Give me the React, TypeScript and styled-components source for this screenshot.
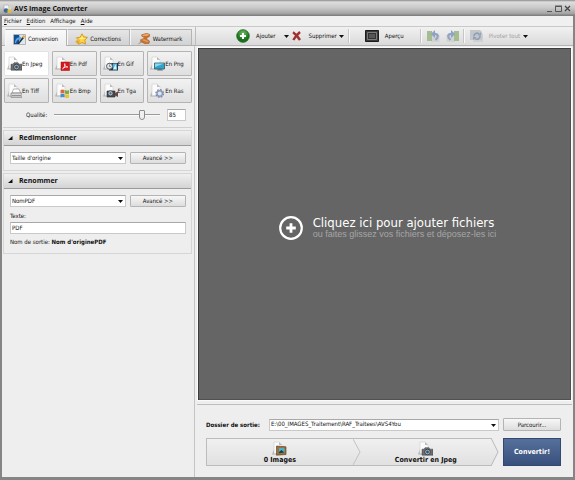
import React, { useState } from "react";
import styled, { createGlobalStyle, css } from "styled-components";

const GlobalStyle = createGlobalStyle`
  *, *::before, *::after { box-sizing: border-box; }
  html, body, #root { margin: 0; height: 100%; }
  body, button, input, select {
    font-family: "DejaVu Sans Condensed", "DejaVu Sans", "Noto Sans", sans-serif;
    font-size: 6px;
    color: #111;
  }
  body { line-height: 8px; overflow: hidden; }
  button, input, select { margin: 0; padding: 0; line-height: 8px; }
  svg { display: block; flex: none; }
`;

const Window = styled.div`
  display: flex;
  flex-direction: column;
  height: 100vh;
  background: #eeeeee;
  border: solid #858585;
  border-width: 0 2px 3px;
`;

const TitleBar = styled.header`
  display: flex;
  align-items: center;
  gap: 2px;
  flex: none;
  height: 16px;
  margin: 0 -2px;
  padding: 1px 4px 0 3px;
  background: linear-gradient(#8c8c8c 0, #dedede 2px, #c8c8c8 8px, #a0a0a0 14px, #808080 15px);
`;

const Title = styled.h1`
  flex: 1;
  margin: 0;
  font-family: "Open Sans", "Noto Sans", sans-serif;
  font-size: 7px;
  font-weight: bold;
`;

const WindowButton = styled.button`
  width: 7px;
  height: 10px;
  border: 0;
  background: none;
`;

const MenuBar = styled.nav`
  display: flex;
  align-items: center;
  gap: 5px;
  flex: none;
  height: 10px;
  padding-left: 2px;
  background: #f0f0f0;
`;

const MenuItem = styled.button`
  border: 0;
  background: none;
`;

const Strip = styled.div`
  display: flex;
  flex: none;
  height: 20px;
  border-top: 1px solid #c9c9c9;
  background: linear-gradient(#f1f1f1, #d9d9d9);
`;

const Tabs = styled.div`
  display: flex;
  flex: none;
  align-items: stretch;
  width: 194px;
  padding: 2px 3px 0 3px;
  border-right: 1px solid #bdbdbd;
  border-bottom: 1px solid #b0b0b0;
`;

const Tab = styled.button<{ $active?: boolean }>`
  display: flex;
  flex: 1;
  align-items: center;
  gap: 2px;
  height: 16px;
  padding: 2px 0 0 7px;
  border: 1px solid #b4b4b4;
  border-left-color: #f7f7f7;
  border-bottom: 0;
  background: linear-gradient(#e6e6e6, #d2d2d2);
  ${(p) =>
    p.$active &&
    css`
      height: 17px;
      background: linear-gradient(#fafafa, #eeeeee);
    `}
`;

const Toolbar = styled.div`
  display: flex;
  align-items: center;
  flex: 1;
  min-width: 0;
  padding-left: 40px;
  border-bottom: 1px solid #b5b5b5;
`;

const Tool = styled.button<{ $gap?: number; $after?: number }>`
  display: flex;
  align-items: center;
  gap: ${(p) => p.$gap ?? 6}px;
  margin-right: ${(p) => p.$after ?? 0}px;
  border: 0;
  background: none;
  white-space: nowrap;
  &:disabled { color: #a2a2a2; }
`;

const Divider = styled.span<{ $after?: number }>`
  flex: none;
  width: 2px;
  height: 14px;
  margin-right: ${(p) => p.$after ?? 5}px;
  border-left: 1px solid #c6c6c6;
  border-right: 1px solid #f8f8f8;
`;

const Body = styled.div`
  display: flex;
  flex: 1;
  min-height: 0;
`;

const Side = styled.aside`
  display: flex;
  flex-direction: column;
  flex: none;
  gap: 2px;
  width: 193px;
  padding: 5px 2px 0 1px;
  border-right: 1px solid #c4c4c4;
`;

const FormatPanel = styled.div`
  display: flex;
  flex-direction: column;
  height: 77px;
  border-bottom: 1px solid #cfcfcf;
`;

const FormatGrid = styled.div`
  display: grid;
  grid-template-columns: repeat(4, 1fr);
  gap: 2px 3px;
  padding-left: 1px;
`;

const FormatButton = styled.button<{ $active?: boolean }>`
  display: flex;
  align-items: center;
  height: 25px;
  padding-left: 2px;
  border: 1px solid #b4b4b4;
  border-radius: 1px;
  background: linear-gradient(#f2f2f2, #dfdfdf);
  white-space: nowrap;
  ${(p) =>
    p.$active &&
    css`
      border-color: #e2e2e2;
      background: #ffffff;
    `}
`;

const QualityRow = styled.div`
  display: flex;
  align-items: center;
  gap: 7px;
  padding: 6px 6px 0 23px;
`;

const Slider = styled.input`
  appearance: none;
  flex: 1;
  min-width: 0;
  height: 12px;
  background: none;
  &::-webkit-slider-runnable-track {
    height: 2px;
    border-top: 1px solid #9a9a9a;
    border-bottom: 1px solid #fbfbfb;
  }
  &::-webkit-slider-thumb {
    appearance: none;
    width: 6px;
    height: 10px;
    margin-top: -5px;
    border: 1px solid #8c8c8c;
    border-radius: 1px 1px 3px 3px;
    background: #f0f0f0;
  }
`;

const TextBox = styled.input`
  display: block;
  width: 100%;
  height: 12px;
  padding: 0 1px 2px;
  border: 1px solid #c9c9c9;
  border-top-color: #a8a8a8;
  background: #ffffff;
`;

const QualityBox = styled(TextBox)`
  flex: none;
  width: 19px;
`;

const Section = styled.section`
  border: 1px solid #d6d6d6;
`;

const SectionHead = styled.h2`
  margin: 0;
  font-size: 7px;
`;

const SectionToggle = styled.button`
  display: flex;
  align-items: center;
  gap: 6px;
  width: 100%;
  height: 15px;
  padding-left: 4px;
  border: 0;
  border-bottom: 1px solid #9b9b9b;
  background: linear-gradient(#f0f0f0, #d4d4d4);
  font-family: "Open Sans", "Noto Sans", sans-serif;
  font-size: 7px;
  font-weight: bold;
`;

const SectionBody = styled.div`
  padding: 6px 5px 6px 6px;
`;

const Row = styled.div`
  display: flex;
  gap: 4px;
`;

const SelectWrap = styled.span`
  position: relative;
  flex: 1;
  min-width: 0;
  & > svg {
    position: absolute;
    right: 3px;
    top: 5px;
    pointer-events: none;
  }
`;

const SelectBox = styled.select`
  appearance: none;
  display: block;
  width: 100%;
  height: 12px;
  padding: 0 10px 1px 1px;
  border: 1px solid #c9c9c9;
  border-top-color: #a8a8a8;
  border-radius: 0;
  background: #ffffff;
`;

const PushButton = styled.button`
  flex: none;
  width: 56px;
  height: 12px;
  border: 1px solid #b4b4b4;
  border-radius: 1px;
  background: linear-gradient(#f7f7f7, #dddddd);
`;

const FieldLabel = styled.label`
  display: block;
  padding: 5px 0 2px;
`;

const OutputName = styled.p`
  margin: 0;
  padding: 4px 0 1px;
`;

const Main = styled.main`
  display: flex;
  flex-direction: column;
  flex: 1;
  min-width: 0;
  padding: 1px 1px 0 2px;
`;

const DropArea = styled.button`
  display: flex;
  flex: 1;
  align-items: center;
  justify-content: center;
  gap: 10px;
  padding: 7px 0 0 6px;
  border: 1px solid #fafafa;
  background: #656565;
  box-shadow: inset 1px 1px 0 #3d3d3d, inset 0 0 0 1px #505050;
  text-align: left;
`;

const DropTitle = styled.span`
  display: block;
  font-size: 13px;
  line-height: 14px;
  color: #ffffff;
`;

const DropHint = styled.span`
  display: block;
  font-family: "Liberation Sans", Arial, sans-serif;
  font-size: 9px;
  line-height: 9px;
  color: #a6a6a6;
`;

const Output = styled.footer`
  display: grid;
  grid-template-columns: 1fr 58px;
  gap: 7px 4px;
  flex: none;
  margin-top: 3px;
  padding: 13px 11px 11px 9px;
  border-top: 1px solid #bdbdbd;
`;

const Destination = styled.div`
  display: flex;
  align-items: center;
  gap: 9px;
`;

const BoldLabel = styled.label`
  font-weight: bold;
  white-space: nowrap;
`;

const BrowseButton = styled(PushButton)`
  width: 100%;
  height: 13px;
`;

const Steps = styled.div`
  display: grid;
  grid-template-columns: 10fr 9fr;
  height: 28px;
  border: 1px solid #bcbcbc;
  border-right: 0;
  background: linear-gradient(#f0f0f0, #e1e1e1);
`;

const Step = styled.div`
  display: flex;
  align-items: stretch;
  justify-content: space-between;
`;

const StepText = styled.div`
  display: flex;
  flex: 1;
  flex-direction: column;
  align-items: center;
  padding-top: 2px;
  font-size: 7px;
  font-weight: bold;
`;

const ConvertButton = styled.button`
  height: 28px;
  border: 1px solid #33496f;
  background: linear-gradient(#56709c, #38507c);
  color: #ffffff;
  font-size: 7px;
  font-weight: bold;
`;

const Caret = () => (
  <svg width="5" height="3" viewBox="0 0 5 3"><path d="M0 0h5L2.5 3z" fill="#111" /></svg>
);

const AppIcon = () => (
  <svg width="9" height="10" viewBox="0 0 9 10">
    <path d="M1 1h4l1 2v5H1z" fill="#f4f4f4" stroke="#999" strokeWidth=".5" />
    <circle cx="3" cy="6.5" r="2.3" fill="#39699b" />
    <circle cx="6.3" cy="7" r="2" fill="#e7bd26" />
    <path d="M5 2l3 1v3L5 5z" fill="#d7d6c9" />
  </svg>
);

const ConversionIcon = () => (
  <svg width="13" height="11" viewBox="0 0 13 11">
    <path d="M.5.5h12v10H.5z" fill="#fff" stroke="#b5b5b5" />
    <path d="M1 1h5.5v9H1z" fill="#174d92" />
    <path d="M6.5 1H12v9H6.5z" fill="#dfe6ee" />
    <path d="M2 9c0-4 2-5.5 4-5.5V1.5l3 2.7-3 2.8V5.5C4.5 5.5 3.5 7 3 9z" fill="#5da7dc" />
    <path d="M4.5 10L9.5 3l1.500 1-5 6z" fill="#202d3c" />
    <path d="M9 3l1.500-2 1.800 1.200L11 4.200z" fill="#e6a930" />
  </svg>
);

const StarIcon = () => (
  <svg width="13" height="12" viewBox="0 0 13 12">
    <path d="M7 .8l1.600 3 3.900.5-2.700 2.800.7 4L7 9.500l-3.500 1.700.5-3.700L1.400 4.800l3.700-.5z" fill="#ffd43a" stroke="#ca8308" strokeWidth=".7" />
    <path d="M7 2.500l.8 2.300 2.700.4-4.500 1-2-.8 2-.5z" fill="#fff3a0" />
    <path d="M.3 8.300l2.200-1.300 1.300 1.600L2.500 11z" fill="#e8a51b" />
  </svg>
);

const StampIcon = () => (
  <svg width="13" height="12" viewBox="0 0 13 12">
    <path d="M3.500 1.800L8.800.3l3 1.200-.5 2.300-2.200.7-.3 1.700 2.700 1.800-.4 2.400-4.300.4-4.300-2.300.2-2 2.700-.8L6.200 4 4 3.500z" fill="#c8712e" stroke="#9a5828" strokeWidth=".5" />
    <path d="M4.300 1.900L9 .8l2.200.9-1.700 1.100-4.800.2z" fill="#f0aa6c" />
    <path d="M3 6.800l3.200-.6 4.300 2.100-1.200.9z" fill="#e79a58" />
    <path d="M.5 10.800l3.200-2" stroke="#8a7a6a" strokeWidth=".8" fill="none" />
  </svg>
);

const AddIcon = () => (
  <svg width="14" height="14" viewBox="0 0 14 14">
    <defs>
      <radialGradient id="green" cy=".3"><stop stopColor="#77be66" /><stop offset="1" stopColor="#16701b" /></radialGradient>
    </defs>
    <circle cx="7" cy="7" r="6.4" fill="url(#green)" stroke="#27672a" strokeWidth=".6" />
    <path d="M7 4v6M4 7h6" stroke="#fff" strokeWidth="2" />
  </svg>
);

const DeleteIcon = () => (
  <svg width="9" height="10" viewBox="0 0 9 10">
    <path d="M1 1.200Q4.500 3.500 8 9M8 1Q4 4.500 1.300 9" stroke="#a33030" strokeWidth="2.400" fill="none" />
  </svg>
);

const PreviewIcon = () => (
  <svg width="14" height="12" viewBox="0 0 14 12">
    <path d="M.5.5h13v11H.5z" fill="#3a3a3a" stroke="#1b1b1b" />
    <path d="M2.500 2.500h9v7h-9z" fill="#333" stroke="#8d8d8d" strokeWidth=".8" />
    <path d="M4 4h6v4H4z" fill="#555" />
  </svg>
);

const RotateIcon = ({ right = false }: { right?: boolean }) => (
  <svg width="13" height="12" viewBox="0 0 13 12">
    <g transform={right ? "matrix(-1 0 0 1 13 0)" : undefined}>
      <path d="M4 5h8.500v7H4z" fill="#d0d3d0" />
      <path d="M0 1h5v10H0z" fill="#a3bd90" />
      <path d="M7 3.800c4.500-.3 5 3.200 1.500 6.200" fill="none" stroke="#8fa3c4" strokeWidth="2.200" />
      <path d="M3.800 4L8 0v8z" fill="#8fa3c4" />
    </g>
  </svg>
);

const RotateAllIcon = () => (
  <svg width="13" height="12" viewBox="0 0 13 12">
    <path d="M3 2h8l2 2v8H3z" fill="#cfd1d3" />
    <path d="M0 0h10l2 2v8H0z" fill="#c3c7c9" />
    <path d="M4 6.500a3 3 0 0 1 5-2.500M10 6a3 3 0 0 1-5 2.500" fill="none" stroke="#8f9eb9" strokeWidth="1.600" />
    <path d="M7.500 5.400H11V2.200zM6.500 7H3v3z" fill="#8f9eb9" />
  </svg>
);

const glyphs: Record<string, React.ReactNode> = {
  Jpeg: (
    <g>
      <path d="M4 8.200h2l1-1.500h4l1 1.500h3v6H4z" fill="#6b6f73" stroke="#3a3a3a" strokeWidth=".5" />
      <circle cx="9.500" cy="11" r="2.800" fill="#aab7c1" stroke="#222" strokeWidth=".7" />
      <circle cx="9.500" cy="11" r="1.400" fill="#315475" />
    </g>
  ),
  Pdf: (
    <g>
      <path d="M6 6h8.500v8.500H6z" fill="#d5191f" stroke="#a20d13" strokeWidth=".5" />
      <path d="M7.500 12.800c2-1 2.800-4 2.300-5.200-1 .7 1 4 3 3.400-1-.7-4 .5-5.300 1.800z" fill="none" stroke="#fff" strokeWidth=".8" />
    </g>
  ),
  Gif: (
    <g>
      <path d="M6 7h9v7.500H6z" fill="#29363f" />
      <path d="M10 7.500h4v6.500h-4z" fill="#4db3e2" />
      <path d="M10.500 13l2-5 1 5z" fill="#e0f5ff" />
      <circle cx="6.500" cy="10.200" r="3" fill="#e0e2e2" stroke="#596168" />
      <path d="M6.500 8.500v2h1.500" fill="none" stroke="#555" strokeWidth=".6" />
    </g>
  ),
  Png: (
    <g>
      <path d="M4.500 7h10v6h-10z" fill="#2da3cf" stroke="#315869" strokeWidth=".8" />
      <path d="M5 7.400h9L5 11z" fill="#8cdaef" />
      <path d="M8 13h4l1 1.500H7z" fill="#6b7174" />
    </g>
  ),
  Tiff: (
    <g>
      <path d="M6.500 6H12l1.500 4H5z" fill="#fff" stroke="#888" strokeWidth=".6" />
      <path d="M4 10h11v4.300H4z" fill="#d6d8d9" stroke="#727577" strokeWidth=".7" />
      <path d="M5 12.600h9" stroke="#8a8a8a" />
    </g>
  ),
  Bmp: (
    <g>
      <path d="M5.500 7q2-1 4 0v3.400q-2-.9-4 0z" fill="#e3653b" />
      <path d="M10 7q2 1 4 0v3.400q-2 1-4 0z" fill="#75ae43" />
      <path d="M5.500 11q2-1 4 0v3.400q-2-.9-4 0z" fill="#468fce" />
      <path d="M10 11q2 1 4 0v3.400q-2 1-4 0z" fill="#efbf35" />
    </g>
  ),
  Tga: (
    <g>
      <path d="M4 8h8v6H4z" fill="#4a4c4f" stroke="#292b2d" strokeWidth=".6" />
      <path d="M12 10l3-1.500V14l-3-1.500z" fill="#68494a" />
      <circle cx="7.500" cy="10.300" r="2.600" fill="#b3c0cb" stroke="#292b2d" strokeWidth=".7" />
      <circle cx="7.500" cy="10.300" r="1.100" fill="#456a8b" />
    </g>
  ),
  Ras: (
    <g>
      <circle cx="9.700" cy="10.500" r="3.700" fill="none" stroke="#7689a9" strokeWidth="1.400" strokeDasharray="1.700 1.200" />
      <circle cx="9.700" cy="10.500" r="2.700" fill="#dce4ef" stroke="#8799b8" strokeWidth="1.400" />
    </g>
  ),
  Images: (
    <g>
      <path d="M4.500 5l9.500.8v7.700l-9.500.7z" fill="#9f703d" stroke="#503516" strokeWidth=".6" />
      <path d="M7 7l5.500.3v4.500L7 12.200z" fill="#45b6cf" />
      <path d="M7 11l2.500-2 3 2.500L7 12.200z" fill="#223b45" />
    </g>
  ),
};

const FileIcon = ({ kind }: { kind: string }) => (
  <svg width="15" height="15" viewBox="0 0 15 15">
    <path d="M2.500 7L0 13.500h10V9z" fill="#9d9d9d" opacity=".7" />
    <path d="M2 1h5l3 3v8.500H2z" fill="#fbfbfb" stroke="#cfcfcf" strokeWidth=".6" />
    <path d="M7 1v3h3z" fill="#bdbdbd" />
    {glyphs[kind]}
  </svg>
);

const Triangle = () => (
  <svg width="5" height="4" viewBox="0 0 5 4"><path d="M4.500 0v4H0z" fill="#111" /></svg>
);

const Chevron = () => (
  <svg width="8" height="26" viewBox="0 0 8 26"><path d="M0 0L7 13 0 26" fill="none" stroke="#c2c2c2" /></svg>
);

const EndChevron = () => (
  <svg width="8" height="28" viewBox="0 0 8 28">
    <path d="M0 0h9v28H0l7-14z" fill="#eeeeee" />
    <path d="M0 0l7 14-7 14" fill="none" stroke="#b8b8b8" />
  </svg>
);

const EndStep = styled(Step)`
  & > svg { margin: -1px 0; }
`;

const BigPlus = () => (
  <svg width="24" height="24" viewBox="0 0 24 24">
    <circle cx="12" cy="12" r="10.800" fill="none" stroke="#fff" strokeWidth="2.200" />
    <path d="M12 7.200v9.600M7.200 12h9.600" stroke="#fff" strokeWidth="2.800" />
  </svg>
);

const Select = ({ id, label, value }: { id: string; label?: string; value: string }) => (
  <SelectWrap>
    <SelectBox id={id} aria-label={label} defaultValue={value}><option>{value}</option></SelectBox>
    <Caret />
  </SelectWrap>
);

const formats = ["Jpeg", "Pdf", "Gif", "Png", "Tiff", "Bmp", "Tga", "Ras"];
const tabs = [
  { name: "Conversion", icon: <ConversionIcon /> },
  { name: "Corrections", icon: <StarIcon /> },
  { name: "Watermark", icon: <StampIcon /> },
];

export default function App() {
  const [tab, setTab] = useState("Conversion");
  const [format, setFormat] = useState("Jpeg");
  const [quality, setQuality] = useState("85");
  const [text, setText] = useState("PDF");

  return (
    <Window>
      <GlobalStyle />
      <TitleBar>
        <AppIcon />
        <Title>AVS Image Converter</Title>
        <WindowButton aria-label="Réduire">
          <svg width="7" height="10" viewBox="0 0 7 10"><path d="M1 7.500h5" stroke="#555" /></svg>
        </WindowButton>
        <WindowButton aria-label="Agrandir">
          <svg width="7" height="10" viewBox="0 0 7 10"><path d="M.5 2.500h6v5h-6zM0 2h7" fill="none" stroke="#555" /></svg>
        </WindowButton>
        <WindowButton aria-label="Fermer">
          <svg width="7" height="10" viewBox="0 0 7 10"><path d="M1 2l5 5M6 2L1 7" stroke="#444" strokeWidth="1.200" /></svg>
        </WindowButton>
      </TitleBar>
      <MenuBar>
        <MenuItem><u>F</u>ichier</MenuItem>
        <MenuItem><u>E</u>dition</MenuItem>
        <MenuItem>Aff<u>i</u>chage</MenuItem>
        <MenuItem><u>A</u>ide</MenuItem>
      </MenuBar>
      <Strip>
        <Tabs role="tablist">
          {tabs.map((t) => (
            <Tab key={t.name} role="tab" aria-selected={tab === t.name} $active={tab === t.name} onClick={() => setTab(t.name)}>
              {t.icon}{t.name}
            </Tab>
          ))}
        </Tabs>
        <Toolbar>
          <Tool $after={8}><AddIcon />Ajouter</Tool>
          <Tool aria-label="Options d'ajout" $after={3}><Caret /></Tool>
          <Tool $gap={8} $after={2}><DeleteIcon />Supprimer</Tool>
          <Tool aria-label="Options de suppression" $after={4}><Caret /></Tool>
          <Divider $after={15} />
          <Tool $after={16}><PreviewIcon />Aperçu</Tool>
          <Divider />
          <Tool aria-label="Pivoter à gauche" disabled $after={6}><RotateIcon /></Tool>
          <Tool aria-label="Pivoter à droite" disabled $after={4}><RotateIcon right /></Tool>
          <Divider />
          <Tool disabled $after={3}><RotateAllIcon />Pivoter tout</Tool>
          <Tool aria-label="Options de rotation"><Caret /></Tool>
        </Toolbar>
      </Strip>
      <Body>
        <Side>
          <FormatPanel>
            <FormatGrid>
              {formats.map((f) => (
                <FormatButton key={f} aria-pressed={format === f} $active={format === f} onClick={() => setFormat(f)}>
                  <FileIcon kind={f} />{`En ${f}`}
                </FormatButton>
              ))}
            </FormatGrid>
            <QualityRow>
              <label htmlFor="quality">Qualité:</label>
              <Slider id="quality" type="range" min="0" max="100" value={quality} onChange={(e) => setQuality(e.target.value)} />
              <QualityBox aria-label="Valeur de qualité" value={quality} onChange={(e) => setQuality(e.target.value)} />
            </QualityRow>
          </FormatPanel>
          <Section>
            <SectionHead><SectionToggle aria-expanded><Triangle />Redimensionner</SectionToggle></SectionHead>
            <SectionBody>
              <Row>
                <Select id="size" label="Taille" value="Taille d'origine" />
                <PushButton>Avancé &gt;&gt;</PushButton>
              </Row>
            </SectionBody>
          </Section>
          <Section>
            <SectionHead><SectionToggle aria-expanded><Triangle />Renommer</SectionToggle></SectionHead>
            <SectionBody>
              <Row>
                <Select id="rename" label="Modèle de nom" value="NomPDF" />
                <PushButton>Avancé &gt;&gt;</PushButton>
              </Row>
              <FieldLabel htmlFor="text">Texte:</FieldLabel>
              <TextBox id="text" value={text} onChange={(e) => setText(e.target.value)} />
              <OutputName>Nom de sortie: <b>{`Nom d'origine${text}`}</b></OutputName>
            </SectionBody>
          </Section>
        </Side>
        <Main>
          <DropArea>
            <BigPlus />
            <span>
              <DropTitle>Cliquez ici pour ajouter fichiers</DropTitle>
              <DropHint>ou faites glissez vos fichiers et déposez-les ici</DropHint>
            </span>
          </DropArea>
          <Output>
            <Destination>
              <BoldLabel htmlFor="folder">Dossier de sortie:</BoldLabel>
              <Select id="folder" value="E:\00_IMAGES_Traitement\RAF_Traitees\AVS4You" />
            </Destination>
            <BrowseButton>Parcourir...</BrowseButton>
            <Steps>
              <Step>
                <StepText><FileIcon kind="Images" />0 Images</StepText>
                <Chevron />
              </Step>
              <EndStep>
                <StepText><FileIcon kind="Jpeg" />Convertir en Jpeg</StepText>
                <EndChevron />
              </EndStep>
            </Steps>
            <ConvertButton>Convertir!</ConvertButton>
          </Output>
        </Main>
      </Body>
    </Window>
  );
}
